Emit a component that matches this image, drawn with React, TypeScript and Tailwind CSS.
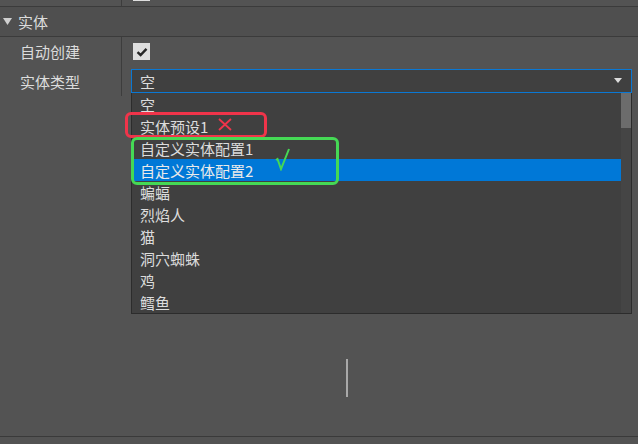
const FONT = '"Noto Sans CJK SC", "Noto Sans", sans-serif';

const options = [
  "空",
  "实体预设1",
  "自定义实体配置1",
  "自定义实体配置2",
  "蝙蝠",
  "烈焰人",
  "猫",
  "洞穴蜘蛛",
  "鸡",
  "鳕鱼",
];

const selectedIdx = 3;

function CheckBox() {
  return (
    <div className="w-[17px] h-[17px] bg-[#dedede] flex items-center justify-center">
      <svg width="12" height="10" viewBox="0 0 12 10">
        <path d="M1.5 5.2 L4.6 8 L10.5 1.8" fill="none" stroke="#262626" strokeWidth="2.4" />
      </svg>
    </div>
  );
}

export default function App() {
  return (
    <div
      className="relative w-[638px] h-[444px] overflow-hidden bg-[#535353] text-[#dcdcdc] text-[15px] flex flex-col"
      style={{ fontFamily: FONT }}
    >
      {/* tail of the previous section */}
      <div className="h-[6px] flex border-b border-[#3b3b3b] box-content">
        <div className="w-[122px] border-r border-[#3d3d3d]" />
        <div className="ml-[11px] w-[17px] h-[1px] bg-[#dedede]" />
      </div>

      {/* section header */}
      <div className="h-[29px] flex items-center bg-[#4f4f4f] border-b border-[#3b3b3b] box-content">
        <svg width="9" height="8" viewBox="0 0 9 8" className="ml-[3px] mt-[1px]">
          <path d="M0 0 H9 L4.5 7 Z" fill="#cfcfcf" />
        </svg>
        <span className="ml-[6px] leading-none">实体</span>
      </div>

      {/* properties */}
      <div className="flex">
        <div className="w-[122px] border-r border-[#3d3d3d] flex flex-col">
          <div className="h-[28px] flex items-center pl-[20px] leading-none">自动创建</div>
          <div className="h-[31px] flex items-center pl-[20px] leading-none pt-[1px]">实体类型</div>
        </div>
        <div className="flex flex-col">
          <div className="h-[28px] flex items-center pl-[11px] pt-[1px]">
            <CheckBox />
          </div>
          <div className="h-[31px] pl-[9px] pt-[4px]">
            <div className="w-[501px] h-[24px] bg-[#404040] border border-[#0a78d4] flex items-center justify-between pl-[8px] pr-[9px] leading-none">
              <span>空</span>
              <svg width="8" height="6" viewBox="0 0 8 6">
                <path d="M0 0 H8 L4 5 Z" fill="#dcdcdc" />
              </svg>
            </div>
          </div>
        </div>
      </div>

      <div className="flex-1 flex flex-col items-center">
        <div className="ml-[55px] mt-[263px] w-[2px] h-[38px] bg-[#a9a9a9]" />
      </div>
      <div className="h-[8px] border-t border-[#3a3a3a]" />

      {/* open dropdown list */}
      <div className="absolute left-[131px] top-[93px] w-[501px] h-[221px] bg-[#404040] border-l border-r border-b border-[#2c2c2c] flex">
        <div className="flex-1 flex flex-col">
          {options.map((o, i) => (
            <div
              key={o}
              className={
                "h-[22px] flex items-center pl-[8px] leading-none " +
                (i === selectedIdx ? "bg-[#0078d7] text-[#eaeaea]" : "")
              }
            >
              {o}
            </div>
          ))}
        </div>
        <div className="w-[10px] bg-[#454545]">
          <div className="h-[35px] bg-[#6c6c6c]" />
        </div>
      </div>

      {/* annotations */}
      <div className="absolute left-[125px] top-[112px] w-[142px] h-[26px] border-[3px] border-[#f0344a] rounded-[6px]" />
      <svg className="absolute left-[218px] top-[118px]" width="14" height="13" viewBox="0 0 14 13">
        <path d="M1 1 L13 12 M13 1 L1 12" stroke="#f0344a" strokeWidth="1.8" />
      </svg>
      <div className="absolute left-[131px] top-[137px] w-[208px] h-[48px] border-[3px] border-[#45d955] rounded-[6px]" />
      <svg className="absolute left-[275px] top-[148px]" width="15" height="23" viewBox="0 0 15 23">
        <path d="M1 12 L2.5 11 L6 21 L14 1" fill="none" stroke="#45d955" strokeWidth="2" />
      </svg>
    </div>
  );
}
